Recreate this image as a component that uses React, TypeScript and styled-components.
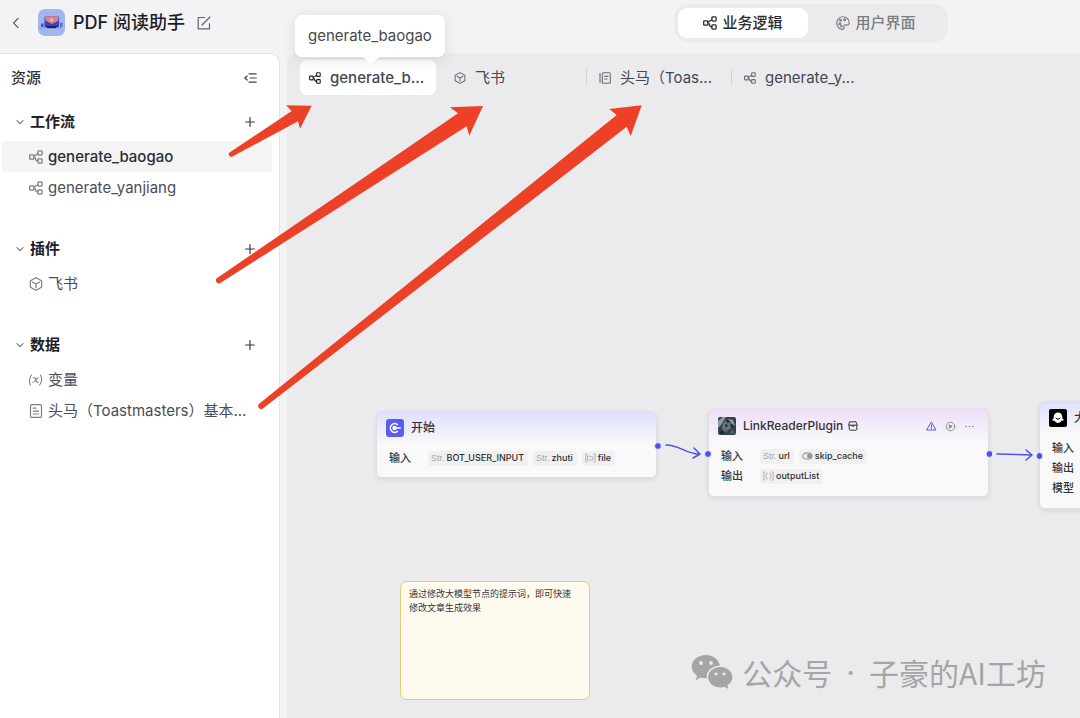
import React from 'react';
import styled, { createGlobalStyle, css } from 'styled-components';

const GlobalStyle = createGlobalStyle`
  * { box-sizing: border-box; }
  body {
    margin: 0;
    background: #f3f3f6;
    color: #33343b;
    font-family: Inter, 'Noto Sans CJK SC', sans-serif;
    font-size: 15px;
    line-height: 20px;
  }
  button {
    font: inherit;
    color: inherit;
    border: 0;
    padding: 0;
    background: none;
    cursor: pointer;
  }
  svg { display: block; flex: none; }
`;

const Page = styled.div`
  display: flex;
  flex-direction: column;
  min-height: 100vh;
  position: relative;
  overflow: hidden;
`;

const Header = styled.header`
  display: grid;
  grid-template-columns: 1fr 1fr;
  align-items: center;
  height: 53px;
  padding: 0 0 8px 8px;
`;

const AppInfo = styled.div`
  display: flex;
  align-items: center;
  gap: 8px;
`;

const IconButton = styled.button`
  display: grid;
  place-items: center;
  width: 16px;
  height: 24px;
  color: #62636a;
`;

const BackButton = styled(IconButton)`
  margin-right: 6px;
`;

const EditButton = styled(IconButton)`
  margin-left: 3px;
`;

const AppTitle = styled.h1`
  margin: 0;
  font-size: 18px;
  font-weight: 500;
  line-height: 24px;
  color: #1d1e24;
`;

const ModeSwitch = styled.div`
  justify-self: start;
  display: flex;
  padding: 4px;
  border-radius: 14px;
  background: #ebebed;
  margin-left: 130px;
`;

const ModeButton = styled.button<{ $active?: boolean }>`
  display: flex;
  align-items: center;
  justify-content: center;
  gap: 5px;
  width: ${(p) => (p.$active ? 130 : 136)}px;
  height: 30px;
  border-radius: 9px;
  font-weight: 500;
  color: ${(p) => (p.$active ? '#2b2c31' : '#7b7c82')};
  background: ${(p) => (p.$active ? '#fff' : 'transparent')};
`;

const Body = styled.div`
  display: flex;
  flex: 1;
  gap: 7px;
`;

const Sidebar = styled.aside`
  flex: none;
  width: 280px;
  border: 1px solid #e4e4e8;
  border-left: 0;
  border-bottom: 0;
  border-radius: 0 10px 0 0;
  background: #fff;
  padding-top: 8px;
`;

const SidebarHead = styled.div`
  display: flex;
  align-items: center;
  justify-content: space-between;
  height: 32px;
  padding: 0 21px 0 11px;
`;

const SidebarTitle = styled.h2`
  margin: 0;
  font-size: 15px;
  font-weight: 500;
`;

const Section = styled.section`
  padding: 12px 7px 18px 2px;
`;

const SectionHead = styled.div`
  display: flex;
  align-items: center;
  gap: 4px;
  height: 32px;
  padding: 0 14px 0 12px;
  margin-bottom: 3px;
`;

const SectionTitle = styled.h3`
  flex: 1;
  margin: 0;
  font-size: 15px;
  font-weight: 600;
  color: #1f2026;
`;

const ItemList = styled.ul`
  list-style: none;
  margin: 0;
  padding: 0;
`;

const Item = styled.button<{ $active?: boolean }>`
  display: flex;
  align-items: center;
  gap: 5px;
  width: 100%;
  height: 31px;
  padding: 0 12px 0 27px;
  border-radius: 4px;
  text-align: left;
  white-space: nowrap;
  color: ${(p) => (p.$active ? '#2b2c34' : '#4b4c58')};
  font-weight: ${(p) => (p.$active ? 500 : 400)};
  background: ${(p) => (p.$active ? '#f4f4f5' : 'transparent')};
  svg { color: #7d7e84; }
`;

const Main = styled.main`
  flex: 1;
  min-width: 0;
  display: flex;
  flex-direction: column;
  border-radius: 10px 0 0 0;
  background: #ebebed;
`;

const TabBar = styled.nav`
  display: flex;
  align-items: center;
  height: 49px;
  padding: 0 13px;
`;

const TabSlot = styled.div<{ $active?: boolean; $divided?: boolean }>`
  position: relative;
  width: ${(p) => (p.$active ? 141 : 145)}px;
  ${(p) =>
    p.$divided &&
    css`
      &::before {
        content: '';
        position: absolute;
        left: 0;
        top: 9px;
        height: 17px;
        border-left: 1px solid #d4d4d8;
      }
    `}
`;

const Tab = styled.button<{ $active?: boolean }>`
  display: flex;
  align-items: center;
  gap: 9px;
  width: 136px;
  height: 35px;
  margin-left: ${(p) => (p.$active ? 0 : 4)}px;
  padding: 0 8px 0 9px;
  border-radius: 7px;
  white-space: nowrap;
  font-weight: ${(p) => (p.$active ? 500 : 400)};
  color: #454653;
  background: ${(p) => (p.$active ? '#fff' : 'transparent')};
  svg { color: ${(p) => (p.$active ? '#222' : '#6c6d73')}; }
`;

const Tooltip = styled.div`
  position: absolute;
  left: -5px;
  bottom: 38px;
  padding: 11px 13px;
  border-radius: 7px;
  background: #fff;
  color: #47484c;
  white-space: nowrap;
  box-shadow: 0 3px 14px rgba(0, 0, 0, 0.1);
  &::after {
    content: '';
    position: absolute;
    left: 68px;
    top: 100%;
    border: 8px solid transparent;
    border-top: 7px solid #fff;
    border-bottom: 0;
  }
`;

const Canvas = styled.div`
  position: relative;
  flex: 1;
  min-height: 616px;
  overflow: hidden;
`;

const Node = styled.article<{ $x: number; $y: number; $tint: string; $height: number }>`
  position: absolute;
  left: ${(p) => p.$x}px;
  top: ${(p) => p.$y}px;
  width: 281px;
  height: ${(p) => p.$height}px;
  padding: 7px 11px 0;
  border: 1px solid #dfdfe3;
  border-radius: 6px;
  background: linear-gradient(${(p) => p.$tint}, #f9f9f9 32px);
  box-shadow: 0 2px 5px rgba(0, 0, 0, 0.08);
`;

const NodeHead = styled.div`
  display: flex;
  align-items: center;
  gap: 7px;
  height: 18px;
  margin: 0 2px 11px -2px;
`;

const NodeTitle = styled.h4`
  display: flex;
  align-items: center;
  gap: 5px;
  margin: 0;
  font-size: 12px;
  font-weight: 500;
  white-space: nowrap;
`;

const NodeTools = styled.div`
  display: flex;
  gap: 8px;
  margin-left: auto;
  color: #85868c;
`;

const NodeRow = styled.div`
  display: flex;
  align-items: center;
  gap: 5px;
  height: 20px;
  font-size: 11px;
  font-weight: 500;
`;

const RowLabel = styled.span`
  flex: none;
  width: 35px;
  padding-left: 1px;
`;

const Tag = styled.span`
  display: flex;
  align-items: center;
  gap: 2px;
  height: 15px;
  padding: 0 4px 0 3px;
  border-radius: 3px;
  background: #f0f0f0;
  font-size: 9px;
  font-weight: 500;
  line-height: 14px;
  color: #2d2e33;
`;

const TypeMark = styled.span`
  color: #a5a5a8;
  font-family: 'Liberation Sans', sans-serif;
  font-weight: 400;
`;

const Note = styled.div`
  position: absolute;
  left: 113px;
  top: 479px;
  width: 190px;
  height: 119px;
  padding: 5px 14px 5px 8px;
  border: 1px solid #e8cb73;
  border-radius: 7px;
  background: #fffaee;
  font-size: 9px;
  line-height: 14px;
`;

const Wires = styled.svg`
  position: absolute;
  inset: 0;
  pointer-events: none;
`;

const Watermark = styled.div`
  position: absolute;
  right: 34px;
  bottom: 26px;
  display: flex;
  align-items: center;
  gap: 9px;
  font-family: 'Noto Sans CJK SC', sans-serif;
  font-size: 30px;
  line-height: 40px;
  color: #a5a5a6;
  white-space: nowrap;
`;

const WatermarkDot = styled.span`
  padding: 0 5px;
  font-family: Inter, sans-serif;
`;

const Annotations = styled.svg`
  position: absolute;
  left: 0;
  top: 0;
  pointer-events: none;
`;

type IconProps = { size?: number };

const line = {
  fill: 'none',
  stroke: 'currentColor',
  strokeLinecap: 'round' as const,
  strokeLinejoin: 'round' as const,
};

const FlowIcon = ({ size = 14 }: IconProps) => (
  <svg width={size} height={size} viewBox="0 0 14 14" {...line} strokeWidth="1.3">
    <rect x="0.7" y="4.8" width="4.2" height="4.4" rx="0.8" />
    <rect x="8.9" y="0.9" width="4.2" height="4.2" rx="0.8" />
    <rect x="8.9" y="8.9" width="4.2" height="4.2" rx="0.8" />
    <path d="M4.9 6.3 8.9 3.8M6.2 7.600Q6.300 11 8.900 11" />
  </svg>
);

const CubeIcon = ({ size = 14 }: IconProps) => (
  <svg width={size} height={size} viewBox="0 0 14 14" {...line} strokeWidth="1.2">
    <path d="M7 .7 12.6 3.8v6.4L7 13.3 1.4 10.2V3.8z" />
    <path d="M3.6 5 7 7l3.4-2M7 7v3.6" />
  </svg>
);

const DocIcon = () => (
  <svg width="14" height="14" viewBox="0 0 14 14" {...line} strokeWidth="1.2">
    <rect x="1.5" y="0.7" width="11" height="12.7" rx="1.2" />
    <path d="M4.3 4.2h2.6M4.3 7.1h5.4M4.3 10h5.4" />
  </svg>
);

const BookIcon = () => (
  <svg width="12" height="12" viewBox="0 0 12 12" {...line} strokeWidth="1.1">
    <rect x="3.3" y="0.8" width="8" height="10.4" rx="1" />
    <path d="M1 1.4v9.2M5.6 4.4H9M5.6 7H8" />
  </svg>
);

const VariableIcon = () => (
  <svg width="14" height="14" viewBox="0 0 14 14" {...line} strokeWidth="1.1">
    <path d="M2.5 2C.3 4.8.1 8.6 1.4 12M11.5 2c1.7 3.1 1.5 7-.9 10M4.4 4.8c1.8-.5 2.2.6 2.5 2.2.3 1.6.9 2.7 2.2 2.2M9.3 4.8C7.3 4.8 6 9.4 3.9 9.2" />
  </svg>
);

const PlusIcon = () => (
  <svg width="10" height="10" viewBox="0 0 10 10" {...line} strokeWidth="1.2" color="#3a3b40">
    <path d="M5 .6v8.8M.6 5h8.8" />
  </svg>
);

const ChevronIcon = () => (
  <svg width="12" height="12" viewBox="0 0 12 12" {...line} strokeWidth="1.2" color="#77787e">
    <path d="m3 4.7 3 3 3-3" />
  </svg>
);

const CollapseIcon = () => (
  <svg width="13" height="12" viewBox="0 0 13 12" {...line} strokeWidth="1.2" color="#45464b">
    <path d="M5 1.8h7.2M6 6h6.2M5 10.2h7.2M3.2 4 .8 6l2.4 2" />
  </svg>
);

const PaletteIcon = () => (
  <svg width="14" height="14" viewBox="0 0 14 14" {...line} strokeWidth="1.2">
    <path d="M6.3 13.3A6.3 6.3 0 1 1 13.3 7c0 1.8-1.8 2.1-3.1 1.9-1.7-.2-2.9.7-2.3 2 .5 1.3-.2 2.5-1.6 2.4z" />
    <circle cx="4.5" cy="4.2" r=".9" />
    <circle cx="8.6" cy="3.8" r=".9" />
    <circle cx="3.9" cy="7.8" r=".9" />
    <circle cx="5.4" cy="10.3" r=".6" />
  </svg>
);

const AppLogo = () => (
  <svg width="27" height="27" viewBox="0 0 27 27">
    <rect width="27" height="27" rx="7" fill="#a2b5ee" />
    <rect x="6.5" y="7.5" width="14.5" height="10.5" rx="1" fill="#3142cc" />
    <path d="M7 7.5h13.5l-.5 4.5-6.300 3L7.500 11.500z" fill="#e8827f" />
    <circle cx="13.6" cy="10.8" r="1.4" fill="#f9c9bd" />
    <path d="M7 17h13.5l-3 2.300h-8z" fill="#1b2266" />
    <rect x="3" y="14.5" width="2.5" height="3.5" fill="#3a4dd4" />
    <rect x="22" y="13.5" width="2.5" height="4.5" rx="1" fill="#5268de" />
    <path d="M1.5 20 3 18.5M5 19h3M19 19h4.5" stroke="#7084d4" />
  </svg>
);

const StartIcon = () => (
  <svg width="18" height="18" viewBox="0 0 18 18">
    <rect width="18" height="18" rx="3" fill="#5a5df0" />
    <path d="M11.4 5.6A4.3 4.3 0 1 0 11.4 12.4" fill="none" stroke="#fff" strokeWidth="1.4" strokeLinecap="round" />
    <circle cx="8.5" cy="9" r="2.2" fill="#fff" />
    <path d="M9 9h5.3" stroke="#fff" strokeWidth="1.5" strokeLinecap="round" />
  </svg>
);

const PluginPicture = () => (
  <svg width="18" height="18" viewBox="0 0 18 18">
    <rect width="18" height="18" rx="2" fill="#364249" />
    <path d="M0 4 5 0h3L3 8l-3 3zM10 2l5 1 2 6-3-2z" fill="#8d9ea5" />
    <path d="M5 6q4-4 8 1l-1 5-5 3-3-4z" fill="#657a80" />
    <path d="m7 7 3 1-2 3zM3 13l4 3-5 1zM9 3l3 2-3 1zM12 7l3 1-1 3z" fill="#17242a" />
    <path d="m11 10 1.5-.6.8 1.6-1.3 1zM5 10.500l1.200 1.200-1 .5z" fill="#a94f47" />
    <path d="m14 12 3 4-5 1zM7 12l3 1-2 3z" fill="#52616a" />
  </svg>
);

const ModelIcon = () => (
  <svg width="18" height="18" viewBox="0 0 18 18">
    <rect width="18" height="18" rx="2" fill="#000" />
    <path d="M9 3.5a4.3 4.3 0 0 0-4.300 4.300v1.700c-1 .3-1.500 1-1.200 1.700.3.600 1.200.7 2 .3.600 1.400 1.900 2.500 3.500 2.500s2.900-1.100 3.500-2.500c.8.400 1.700.3 2-.3.300-.7-.2-1.400-1.200-1.700V7.800A4.300 4.300 0 0 0 9 3.500z" fill="#fff" />
    <path d="M6.9 9.3q2.1 2.2 4.2 0" fill="none" stroke="#000" strokeLinecap="round" />
  </svg>
);

const StoreIcon = () => (
  <svg width="10" height="10" viewBox="0 0 10 10" {...line}>
    <path d="M2 .8h6l1.2 2.7v.7H.8v-.7zM1.200 4.200v4c0 .6.400 1 1 1h5.600c.6 0 1-.4 1-1v-4M3.400 4.200q1.600 2.800 3.200 0" />
  </svg>
);

const WarningIcon = () => (
  <svg width="11" height="11" viewBox="0 0 11 11" {...line} color="#5a57ea">
    <path d="M5.5 1.3 10 9H1zM5.5 4v2.3M5.5 7.5v.1" />
  </svg>
);

const PlayIcon = () => (
  <svg width="11" height="11" viewBox="0 0 11 11" {...line} strokeWidth=".9">
    <circle cx="5.5" cy="5.5" r="4.3" />
    <path d="m4.6 3.9 2.5 1.6-2.5 1.6z" fill="currentColor" />
  </svg>
);

const MoreIcon = () => (
  <svg width="11" height="11" viewBox="0 0 11 11" fill="currentColor">
    <circle cx="2" cy="5.5" r=".8" />
    <circle cx="5.5" cy="5.5" r=".8" />
    <circle cx="9" cy="5.5" r=".8" />
  </svg>
);

const FileMark = () => (
  <svg width="11" height="10" viewBox="0 0 11 10" {...line} strokeWidth=".8" color="#a5a5a8">
    <path d="M2 1H.8v8H2M9 1h1.2v8H9M3 3h2l.6.8H8V7H3z" />
  </svg>
);

const BoolMark = () => (
  <svg width="11" height="10" viewBox="0 0 11 10" {...line} color="#929296">
    <rect x=".6" y="2" width="9.8" height="6" rx="3" />
    <circle cx="7.4" cy="5" r="2.4" fill="currentColor" stroke="none" />
  </svg>
);

const ArrayMark = () => (
  <svg width="11" height="10" viewBox="0 0 11 10" {...line} strokeWidth=".8" color="#a5a5a8">
    <path d="M2 1H.8v8H2M9 1h1.2v8H9M4.3 2q-1 0-.9 1.5Q3.4 5 2.6 5q.8 0 .8 1.5Q3.3 8 4.3 8M6.7 2q1 0 .9 1.5Q7.6 5 8.4 5q-.8 0-.8 1.5Q7.7 8 6.7 8" />
  </svg>
);

const WechatIcon = () => (
  <svg width="42" height="36" viewBox="0 0 42 36" fill="#a5a5a6">
    <path d="M15 1C7 1 .7 6 .7 12.6c0 3.7 2 6.9 5.3 9.1l-1.2 4.6 4.8-2.7c1.9.6 4 .8 6.3.6C14.5 17.500 21 11.500 29 11.700 27.700 5.500 22 1 15 1z" />
    <path d="M29.3 13c-6.7 0-12.2 4.6-12.2 10.2 0 5.7 5.5 10.2 12.2 10.2 1.4 0 2.8-.2 4-.6l4.1 2.2-1-3.7c3.2-1.9 5-4.8 5-8.1 0-5.6-5.4-10.2-12.1-10.2z" />
    <g fill="#ebebed">
      <circle cx="10" cy="9" r="1.9" />
      <circle cx="20" cy="9" r="1.9" />
      <circle cx="25" cy="20" r="1.6" />
      <circle cx="33" cy="20" r="1.6" />
    </g>
  </svg>
);

type SectionData = {
  title: string;
  items: { label: string; icon: React.ReactNode; active?: boolean }[];
};

const sections: SectionData[] = [
  {
    title: '工作流',
    items: [
      { label: 'generate_baogao', icon: <FlowIcon />, active: true },
      { label: 'generate_yanjiang', icon: <FlowIcon /> },
    ],
  },
  { title: '插件', items: [{ label: '飞书', icon: <CubeIcon /> }] },
  {
    title: '数据',
    items: [
      { label: '变量', icon: <VariableIcon /> },
      { label: '头马（Toastmasters）基本...', icon: <DocIcon /> },
    ],
  },
];

type TabData = {
  label: string;
  icon: React.ReactNode;
  tooltip?: string;
  divided?: boolean;
};

const tabs: TabData[] = [
  { label: 'generate_b...', icon: <FlowIcon size={12} />, tooltip: 'generate_baogao' },
  { label: '飞书', icon: <CubeIcon size={12} /> },
  { label: '头马（Toas...', icon: <BookIcon />, divided: true },
  { label: 'generate_y...', icon: <FlowIcon size={12} />, divided: true },
];

export default function App() {
  return (
    <Page>
      <GlobalStyle />
      <Header>
        <AppInfo>
          <BackButton aria-label="返回">
            <svg width="8" height="12" viewBox="0 0 8 12" {...line} strokeWidth="1.2">
              <path d="M6 1.5 1.5 6 6 10.5" />
            </svg>
          </BackButton>
          <AppLogo />
          <AppTitle>PDF 阅读助手</AppTitle>
          <EditButton aria-label="编辑">
            <svg width="14" height="14" viewBox="0 0 14 14" {...line} strokeWidth="1.2">
              <path d="M7.5 1.5H1.2v11.3h11.3V7.5M5 9l8-8" />
            </svg>
          </EditButton>
        </AppInfo>
        <ModeSwitch>
          <ModeButton $active>
            <FlowIcon />
            业务逻辑
          </ModeButton>
          <ModeButton>
            <PaletteIcon />
            用户界面
          </ModeButton>
        </ModeSwitch>
      </Header>
      <Body>
        <Sidebar>
          <SidebarHead>
            <SidebarTitle>资源</SidebarTitle>
            <IconButton aria-label="收起">
              <CollapseIcon />
            </IconButton>
          </SidebarHead>
          {sections.map((section) => (
            <Section key={section.title}>
              <SectionHead>
                <ChevronIcon />
                <SectionTitle>{section.title}</SectionTitle>
                <IconButton aria-label={`添加${section.title}`}>
                  <PlusIcon />
                </IconButton>
              </SectionHead>
              <ItemList>
                {section.items.map((item) => (
                  <li key={item.label}>
                    <Item $active={item.active}>
                      {item.icon}
                      {item.label}
                    </Item>
                  </li>
                ))}
              </ItemList>
            </Section>
          ))}
        </Sidebar>
        <Main>
          <TabBar>
            {tabs.map((tab) => (
              <TabSlot key={tab.label} $active={!!tab.tooltip} $divided={tab.divided}>
                <Tab $active={!!tab.tooltip}>
                  {tab.icon}
                  {tab.label}
                </Tab>
                {tab.tooltip && <Tooltip role="tooltip">{tab.tooltip}</Tooltip>}
              </TabSlot>
            ))}
          </TabBar>
          <Canvas>
            <Node $x={89} $y={309} $height={67} $tint="#dfe0fd">
              <NodeHead>
                <StartIcon />
                <NodeTitle>开始</NodeTitle>
              </NodeHead>
              <NodeRow>
                <RowLabel>输入</RowLabel>
                <Tag><TypeMark>Str.</TypeMark>BOT_USER_INPUT</Tag>
                <Tag><TypeMark>Str.</TypeMark>zhuti</Tag>
                <Tag><FileMark />file</Tag>
              </NodeRow>
            </Node>
            <Node $x={421} $y={307} $height={88} $tint="#efdffa">
              <NodeHead>
                <PluginPicture />
                <NodeTitle>
                  LinkReaderPlugin
                  <StoreIcon />
                </NodeTitle>
                <NodeTools>
                  <WarningIcon />
                  <PlayIcon />
                  <MoreIcon />
                </NodeTools>
              </NodeHead>
              <NodeRow>
                <RowLabel>输入</RowLabel>
                <Tag><TypeMark>Str.</TypeMark>url</Tag>
                <Tag><BoolMark />skip_cache</Tag>
              </NodeRow>
              <NodeRow>
                <RowLabel>输出</RowLabel>
                <Tag><ArrayMark />outputList</Tag>
              </NodeRow>
            </Node>
            <Node $x={752} $y={299} $height={108} $tint="#dfe0fd">
              <NodeHead>
                <ModelIcon />
                <NodeTitle>大模型</NodeTitle>
              </NodeHead>
              <NodeRow><RowLabel>输入</RowLabel></NodeRow>
              <NodeRow><RowLabel>输出</RowLabel></NodeRow>
              <NodeRow><RowLabel>模型</RowLabel></NodeRow>
            </Node>
            <Wires width="793" height="616" viewBox="0 0 793 616" fill="none" stroke="#4d53e8" strokeWidth="1.5" strokeLinecap="round" strokeLinejoin="round">
              <path d="M379 343c14 0 20 9 33 9M407 346l6 6-7 4" />
              <path d="m710 352 34 1M739 348l6 5-6 5" />
              <g fill="#4d53e8" stroke="#f4f4fb" strokeWidth="1">
                <circle cx="371" cy="344" r="3.5" />
                <circle cx="421" cy="352" r="3.5" />
                <circle cx="702.5" cy="352" r="3.5" />
                <circle cx="752.5" cy="354" r="3.5" />
              </g>
            </Wires>
            <Note>通过修改大模型节点的提示词，即可快速修改文章生成效果</Note>
            <Watermark>
              <WechatIcon />
              <span>公众号</span>
              <WatermarkDot>·</WatermarkDot>
              <span>子豪的AI工坊</span>
            </Watermark>
          </Canvas>
        </Main>
      </Body>
      <Annotations width="660" height="420" viewBox="0 0 660 420" fill="#ec4126">
        <path d="M311.7 105.7 286 105.3l5.7 5.7L230 152.2a2.4 2.4 0 0 0 2.5 4.2L298 121.3l2 7.4z" />
        <path d="M483 106l-33 1.3 8 6L216.8 278.2a3 3 0 0 0 3.1 5L466.7 126.3l2.6 9.4z" />
        <path d="M641.7 105.3 609.3 109l7.4 6L259.2 403.8a3 3 0 0 0 3.7 4.7L626.7 126.7l4 9.300z" />
      </Annotations>
    </Page>
  );
}
